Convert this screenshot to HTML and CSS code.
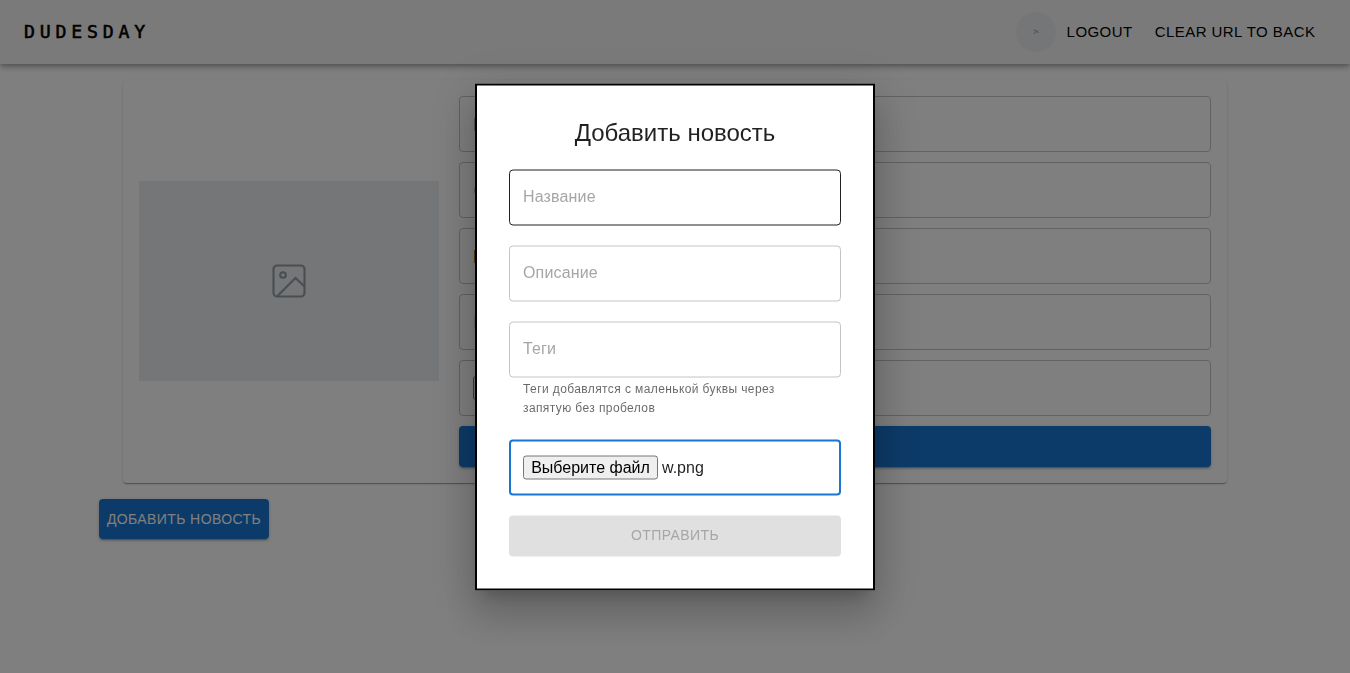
FILE: index.html
```html
<!DOCTYPE html>
<html lang="ru">
<head>
<meta charset="utf-8">
<title>DUDESDAY</title>
<link rel="stylesheet" href="styles.css">
</head>
<body>
<header class="appbar">
  <span class="logo">DUDESDAY</span>
  <nav class="nav">
    <span class="avatar"><svg class="avatar-icon" viewBox="0 0 6 6"><path d="M1 1L5 2.5M3 2.5L1 5M4 2.5L5.5 4"/></svg></span>
    <a class="link link-logout">LOGOUT</a>
    <a class="link link-clear">CLEAR URL TO BACK</a>
  </nav>
</header>
<main class="container">
  <section class="card">
    <div class="preview">
      <svg class="preview-icon" viewBox="0 0 34 34"><rect x="1.5" y="1.5" width="31" height="31" rx="3.5"/><circle cx="11" cy="11" r="2.8"/><path d="M5.5 32L23.5 14L32.5 22.5"/></svg>
    </div>
    <form class="card-form">
      <div class="outlined"><i class="mark mark-dark"></i></div>
      <div class="outlined"><i class="mark mark-dot"></i></div>
      <div class="outlined"><i class="mark mark-orange"></i></div>
      <div class="outlined"><i class="mark mark-light"></i></div>
      <div class="outlined"><i class="mark mark-file"></i></div>
      <div class="card-submit"></div>
    </form>
  </section>
  <button class="add">ДОБАВИТЬ НОВОСТЬ</button>
</main>
<div class="backdrop"></div>
<div class="modal">
  <h2 class="title">Добавить новость</h2>
  <div class="field field-hover"><span class="placeholder">Название</span></div>
  <div class="field"><span class="placeholder">Описание</span></div>
  <div class="field"><span class="placeholder">Теги</span></div>
  <p class="helper">Теги добавлятся с маленькой буквы через запятую без пробелов</p>
  <div class="field field-focus"><span class="file-button">Выберите файл</span><span class="file-name">w.png</span></div>
  <div class="send">ОТПРАВИТЬ</div>
</div>
</body>
</html>
```
FILE: styles.css
```css
* { box-sizing: border-box; }
body {
  margin: 0;
  height: 673px;
  overflow: hidden;
  background: #fff;
  font-family: "Liberation Sans", Arial, sans-serif;
  color: rgba(0, 0, 0, .87);
}
.appbar {
  position: relative;
  display: flex;
  align-items: center;
  justify-content: space-between;
  height: 64px;
  padding: 0 34.6px 0 24px;
  background: #f5f5f5;
  box-shadow: 0 2px 4px -1px rgba(0,0,0,.2), 0 4px 5px rgba(0,0,0,.14), 0 1px 10px rgba(0,0,0,.12);
}
.logo {
  font: 400 18.2px/32px "DejaVu Sans Mono", monospace;
  letter-spacing: 4.8px;
  color: #000;
  -webkit-text-stroke: .55px #000;
}
.nav { display: flex; align-items: center; }
.avatar {
  display: flex;
  align-items: center;
  justify-content: center;
  width: 40px;
  height: 40px;
  margin-right: 10.5px;
  border-radius: 50%;
  background: #e9ecef;
}
.avatar-icon { width: 6px; height: 6px; fill: none; stroke: #868e96; stroke-width: .8; }
.link { font-size: 15px; line-height: 24px; letter-spacing: .45px; white-space: nowrap; color: #000; }
.link-logout { margin-right: 22px; }
.container { width: 1152px; margin: 16px auto 0; }
.card {
  display: flex;
  align-items: center;
  gap: 20px;
  width: 1104px;
  height: 403px;
  margin: 0 auto;
  padding: 16px;
  border-radius: 4px;
  background: #fff;
  box-shadow: 0 2px 1px -1px rgba(0,0,0,.2), 0 1px 1px rgba(0,0,0,.14), 0 1px 3px rgba(0,0,0,.12);
}
.preview {
  display: flex;
  align-items: center;
  justify-content: center;
  width: 300px;
  height: 200px;
  margin-bottom: 1px;
  background: #e9ecef;
}
.preview-icon { width: 34px; height: 34px; fill: none; stroke: #949da4; stroke-width: 2.1; }
.card-form { flex: 1; display: flex; flex-direction: column; gap: 10px; }
.outlined {
  display: flex;
  align-items: center;
  height: 56px;
  padding-left: 13px;
  border: 1px solid #c4c4c4;
  border-radius: 4px;
}
.mark { width: 2px; height: 13px; margin-left: 1px; }
.mark-dark { background: #b0b0b0; }
.mark-dot { height: 5px; background: #c0c0c0; }
.mark-orange { background: #b87420; }
.mark-light { background: #d8d8d8; }
.mark-file { width: 40px; height: 24px; margin-left: 0; border: 1px solid #767676; border-radius: 3px; background: #efefef; }
.card-submit {
  height: 41px;
  border-radius: 4px;
  background: #1976d2;
  box-shadow: 0 3px 1px -2px rgba(0,0,0,.2), 0 2px 2px rgba(0,0,0,.14), 0 1px 5px rgba(0,0,0,.12);
}
.add {
  display: block;
  width: 170px;
  height: 40px;
  margin-top: 16px;
  padding: 0;
  border: 0;
  border-radius: 4px;
  background: #1976d2;
  color: #fff;
  font: 14px/24px "Liberation Sans", Arial, sans-serif;
  letter-spacing: .4px;
  white-space: nowrap;
  box-shadow: 0 3px 1px -2px rgba(0,0,0,.2), 0 2px 2px rgba(0,0,0,.14), 0 1px 5px rgba(0,0,0,.12);
}
.backdrop { position: fixed; inset: 0; background: rgba(0, 0, 0, .5); }
.modal {
  position: fixed;
  top: 50%;
  left: 50%;
  transform: translate(-50%, -50%);
  display: flex;
  flex-direction: column;
  width: 400px;
  height: 507px;
  padding: 32px;
  border: 2px solid #000;
  background: #fff;
  box-shadow: 0 11px 15px -7px rgba(0,0,0,.2), 0 24px 38px 3px rgba(0,0,0,.14), 0 9px 46px 8px rgba(0,0,0,.12);
}
.title { margin: 0 0 22px; font-size: 24px; font-weight: 400; line-height: 30px; text-align: center; }
.field {
  display: flex;
  align-items: center;
  flex: none;
  height: 56px;
  margin-bottom: 20px;
  padding: 0 13px;
  border: 1px solid #c4c4c4;
  border-radius: 4px;
  font-size: 16px;
}
.field-hover { border-color: #212121; }
.field-focus { border: 2px solid #1976d2; padding: 0 12px; }
.placeholder { margin-bottom: 2px; color: #a6a6a6; letter-spacing: .15px; }
.field:has(+ .helper) { margin-bottom: 2px; }
.helper { margin: 0 14px 21px; font-size: 12px; line-height: 19.5px; letter-spacing: .4px; color: rgba(0,0,0,.6); }
.file-button {
  width: 135px;
  height: 24px;
  margin-top: 1px;
  border: 1px solid #767676;
  border-radius: 3px;
  background: #efefef;
  color: #000;
  line-height: 21px;
  text-align: center;
  white-space: nowrap;
}
.file-name { margin-left: 4px; }
.send {
  height: 41px;
  border-radius: 4px;
  background: #e0e0e0;
  color: #a6a6a6;
  font-size: 14px;
  line-height: 39px;
  letter-spacing: .4px;
  text-align: center;
}
```
